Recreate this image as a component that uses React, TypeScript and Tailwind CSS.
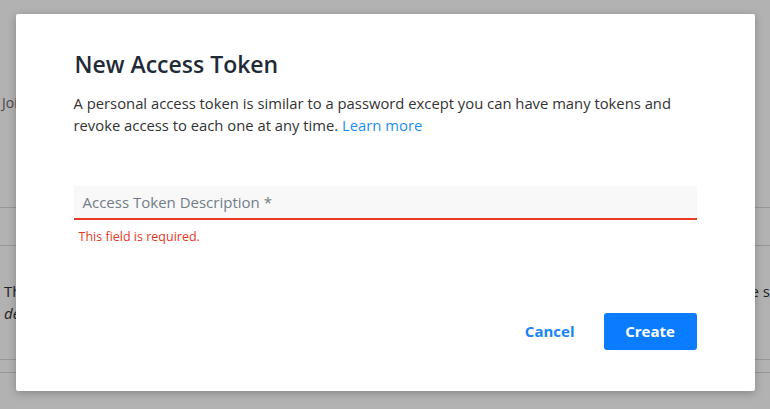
import React from "react";

export default function App() {
  return (
    <div
      className="relative h-[409px] w-[770px] overflow-hidden bg-white"
      style={{ fontFamily: '"Open Sans", "Noto Sans", sans-serif' }}
    >
      {/* underlying page */}
      <div className="flex flex-col">
        <div className="h-[93px]" />
        <div className="h-[20px] pl-[2px] text-[14px] leading-[20px] text-[#6b6b6b]">Joined</div>
        <div className="h-[94px]" />
        <div className="h-[39px] border-y border-[#d8d8d8]" />
        <div className="h-[34px]" />
        <div className="flex justify-between pl-[4px] text-[15px] leading-[22px] text-[#333]">
          <span>The token</span>
          <span>e s</span>
        </div>
        <div className="pl-[4px] text-[15px] italic leading-[22px] text-[#333]">description</div>
        <div className="h-[35px]" />
        <div className="h-[14px] border-y border-[#d8d8d8]" />
      </div>

      {/* overlay */}
      <div className="absolute inset-0 flex items-start justify-center bg-black/30 pt-[14px]">
        <div className="flex w-[739px] flex-col rounded-[2px] bg-white px-[58px] pb-[41px] pt-[35px] shadow-[0_2px_8px_rgba(0,0,0,0.25)]">
          <h2 className="pl-[1px] text-[23px] font-semibold leading-[30px] text-[#1f2b37]">New Access Token</h2>
          <p className="mt-[13px] text-[14.8px] leading-[22px] text-[#333]">
            A personal access token is similar to a password except you can have many tokens and revoke access to each one at any time.{" "}
            <a className="text-[#1b8ef2]">Learn more</a>
          </p>
          <div className="mt-[50px] flex flex-col bg-[#f8f8f8]">
            <div className="flex h-[32px] items-center pl-[9px] text-[15px] text-[#737d88]">Access Token Description *</div>
            <div className="h-[2px] bg-[#ec3a24]" />
          </div>
          <div className="mt-[8px] pl-[5px] text-[12.5px] leading-[17px] text-[#e8361e]">This field is required.</div>
          <div className="mt-[68px] flex items-center justify-end">
            <button className="mr-[29px] text-[15px] font-bold text-[#1a84f2]">Cancel</button>
            <button className="h-[37px] w-[93px] rounded-[3px] bg-[#0a7cff] text-[15px] font-bold text-white">Create</button>
          </div>
        </div>
      </div>
    </div>
  );
}
